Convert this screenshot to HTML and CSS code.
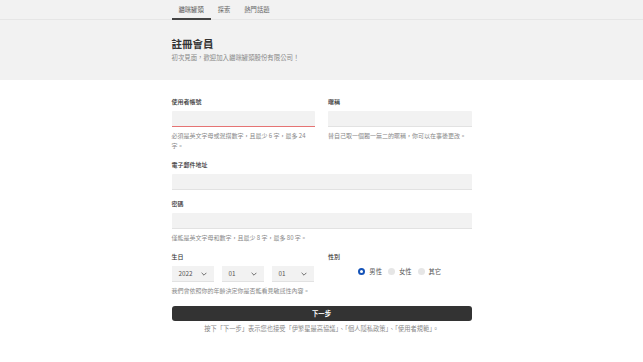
FILE: index.html
```html
<!DOCTYPE html>
<html lang="zh-Hant">

<head>
    <meta charset="UTF-8">
    <meta name="viewport" content="width=device-width, initial-scale=1.0">
    <title>註冊會員</title>
    <link rel="stylesheet" href="styles.css">
</head>

<body>
    <div class="top">
        <div class="nav-bar">
            <div class="wrap nav">
                <a class="tab active" href="#">貓咪罐頭</a>
                <a class="tab" href="#">探索</a>
                <a class="tab" href="#">熱門話題</a>
            </div>
        </div>
        <div class="wrap header">
            <h1>註冊會員</h1>
            <p>初次見面，歡迎加入貓咪罐頭股份有限公司！</p>
        </div>
    </div>

    <form class="wrap signup">
        <div class="row">
            <div class="field">
                <label>使用者帳號</label>
                <div class="input error"></div>
                <p class="help">必須是英文字母或混搭數字，且最少 6 字，最多 24 字。</p>
            </div>
            <div class="field">
                <label>暱稱</label>
                <div class="input"></div>
                <p class="help">替自己取一個獨一無二的暱稱，你可以在事後更改。</p>
            </div>
        </div>

        <div class="field">
            <label>電子郵件地址</label>
            <div class="input"></div>
        </div>

        <div class="field">
            <label>密碼</label>
            <div class="input"></div>
            <p class="help">僅能是英文字母和數字，且最少 8 字，最多 80 字。</p>
        </div>

        <div class="row">
            <div class="field">
                <label>生日</label>
                <div class="selects">
                    <div class="select"><span>2022</span>
                        <svg viewBox="0 0 10 6" width="6" height="4"><path d="M1 1l4 4 4-4" fill="none" stroke="#555" stroke-width="1.4"/></svg>
                    </div>
                    <div class="select"><span>01</span>
                        <svg viewBox="0 0 10 6" width="6" height="4"><path d="M1 1l4 4 4-4" fill="none" stroke="#555" stroke-width="1.4"/></svg>
                    </div>
                    <div class="select"><span>01</span>
                        <svg viewBox="0 0 10 6" width="6" height="4"><path d="M1 1l4 4 4-4" fill="none" stroke="#555" stroke-width="1.4"/></svg>
                    </div>
                </div>
                <p class="help">我們會依照你的年齡決定你是否能看見敏感性內容。</p>
            </div>
            <div class="field">
                <label>性別</label>
                <div class="radios">
                    <span class="radio"><i class="dot checked"></i>男性</span>
                    <span class="radio"><i class="dot"></i>女性</span>
                    <span class="radio"><i class="dot"></i>其它</span>
                </div>
            </div>
        </div>

        <button class="next" type="button">下一步</button>
        <p class="terms">按下「下一步」表示您也接受「伊繁星最高協議」、「個人隱私政策」、「使用者規範」。</p>
    </form>
</body>

</html>
```

FILE: styles.css
```css
* {
    padding: 0;
    margin: 0;
    box-sizing: border-box;
}

body {
    font-family: "Noto Sans CJK TC", "Noto Sans", sans-serif;
    color: #333;
    background-color: #fff;
}

.wrap {
    width: 300px;
    margin: 0 auto;
}

.top {
    background-color: #f2f2f2;
    height: 80px;
}

.nav-bar {
    border-bottom: 1px solid #e6e6e6;
}

.nav {
    display: flex;
    height: 19px;
}

.tab {
    display: block;
    padding: 0 7px;
    font-size: 6.3px;
    line-height: 19px;
    color: #666;
    text-decoration: none;
}

.tab.active {
    color: #555;
    border-bottom: 2px solid #444;
    height: 20px;
}

.header {
    padding-top: 17px;
}

.header h1 {
    font-size: 10.5px;
    line-height: 14px;
    font-weight: 700;
    color: #333;
}

.header p {
    font-size: 6.4px;
    line-height: 10px;
    color: #888;
    margin-top: 2px;
}

.signup {
    padding-top: 17px;
}

.row {
    display: grid;
    grid-template-columns: 1fr 1fr;
    column-gap: 13px;
}

.field {
    margin-bottom: 9px;
}

.field label {
    display: block;
    font-size: 6px;
    line-height: 10px;
    font-weight: 500;
    color: #333;
    margin-bottom: 4px;
}

.input {
    height: 16px;
    background-color: #f2f2f2;
    border-bottom: 1px solid #e2e2e2;
    border-radius: 1px 1px 0 0;
}

.input.error {
    border-bottom: 1.5px solid #e57373;
}

.help {
    font-size: 6px;
    line-height: 10px;
    color: #888;
    margin-top: 4px;
}

.selects {
    display: flex;
    gap: 8px;
}

.select {
    width: 42px;
    height: 16px;
    background-color: #f2f2f2;
    border-bottom: 1px solid #e2e2e2;
    display: flex;
    align-items: center;
    justify-content: space-between;
    padding: 0 7px;
    font-size: 6.3px;
    color: #555;
}

.radios {
    display: flex;
    justify-content: center;
    gap: 6px;
    height: 16px;
    align-items: center;
    margin-top: -3px;
}

.radio {
    display: flex;
    align-items: center;
    gap: 4px;
    font-size: 6.3px;
    color: #555;
}

.dot {
    display: block;
    width: 7px;
    height: 7px;
    border-radius: 50%;
    background-color: #e6e6e6;
}

.dot.checked {
    background-color: #fff;
    border: 2px solid #1553b8;
}

.next {
    display: block;
    width: 100%;
    height: 15px;
    margin-top: 1px;
    border: 0;
    border-radius: 3px;
    background-color: #333;
    color: #fff;
    font-family: inherit;
    font-size: 6.3px;
    font-weight: 700;
}

.terms {
    text-align: center;
    font-size: 6.25px;
    line-height: 10px;
    color: #888;
    margin-top: 3px;
}
```
